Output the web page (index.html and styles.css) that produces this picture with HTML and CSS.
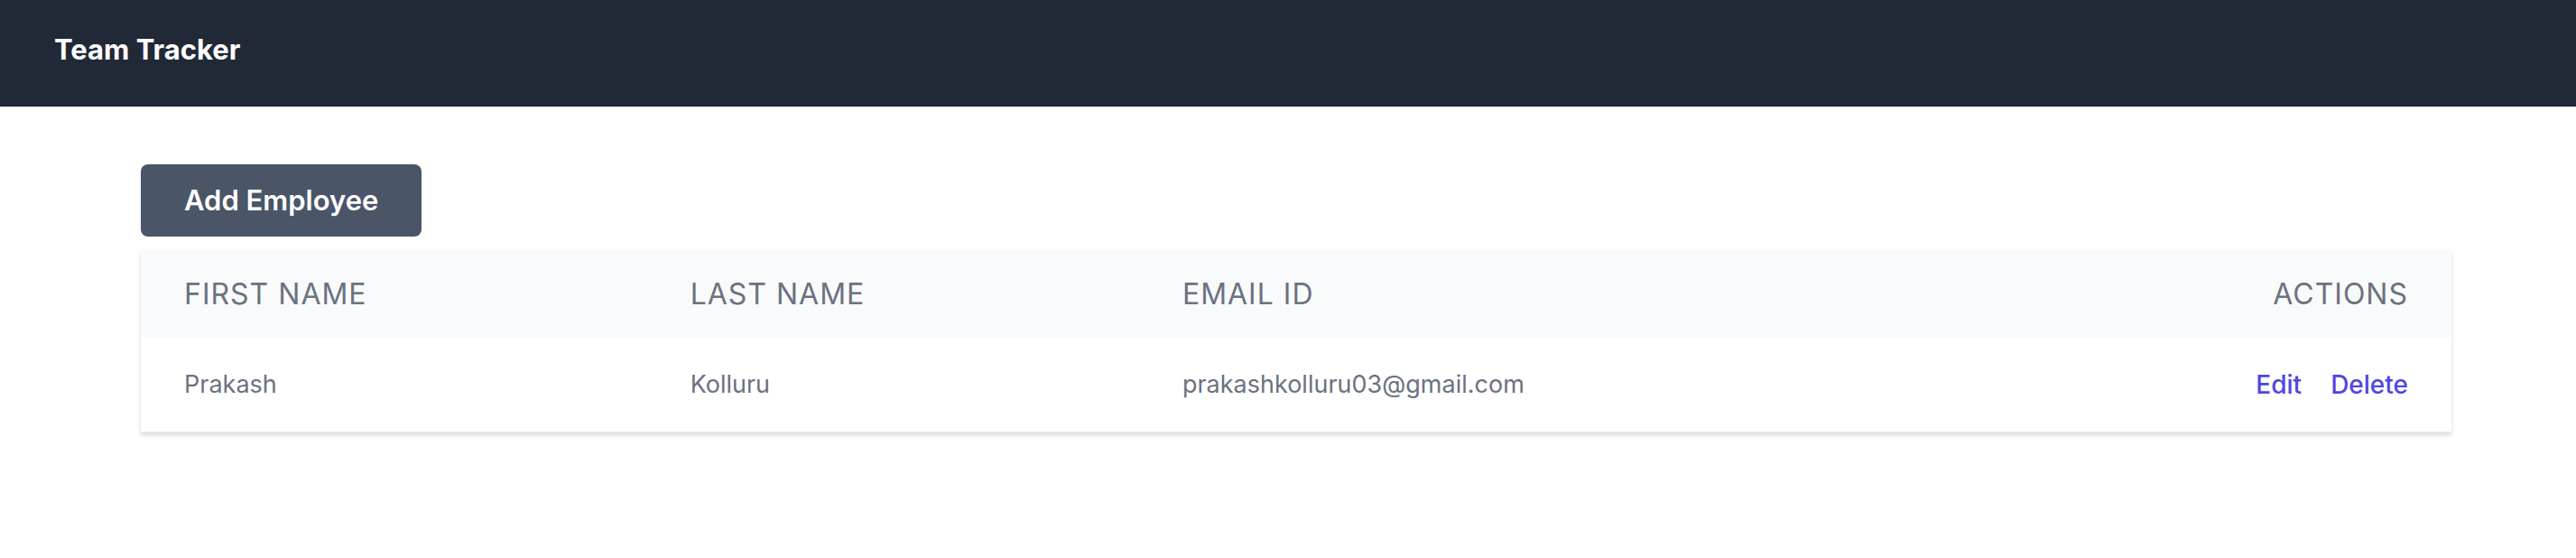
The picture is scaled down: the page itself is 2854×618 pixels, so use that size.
FILE: index.html
```html
<!DOCTYPE html>
<html lang="en">
<head>
<meta charset="utf-8">
<title>Team Tracker</title>
<link rel="stylesheet" href="styles.css">
</head>
<body>
<header class="navbar">
  <a class="brand" href="#">Team Tracker</a>
</header>
<main class="content">
  <button class="add-button" type="button">Add Employee</button>
  <div class="table-card">
    <table class="employees">
      <colgroup>
        <col class="col-first">
        <col class="col-last">
        <col class="col-email">
        <col class="col-actions">
      </colgroup>
      <thead>
        <tr>
          <th scope="col">First Name</th>
          <th scope="col">Last Name</th>
          <th scope="col">Email ID</th>
          <th scope="col" class="actions">Actions</th>
        </tr>
      </thead>
      <tbody>
        <tr>
          <td>Prakash</td>
          <td>Kolluru</td>
          <td>prakashkolluru03@gmail.com</td>
          <td class="actions"><div class="links"><a class="link" href="#">Edit</a><a class="link" href="#">Delete</a></div></td>
        </tr>
      </tbody>
    </table>
  </div>
</main>
</body>
</html>
```
FILE: styles.css
```css
* {
  box-sizing: border-box;
}

body {
  margin: 0;
  background: #ffffff;
  font-family: Inter, "Liberation Sans", sans-serif;
  color: #6b7280;
}

.navbar {
  padding: 31px 60px 38px;
  background: #222936;
  border-bottom: 1px solid #1a202c;
}

.brand {
  display: block;
  font-size: 31px;
  line-height: 48px;
  font-weight: 700;
  color: #ffffff;
  text-decoration: none;
}

.content {
  display: flex;
  flex-direction: column;
  align-items: flex-start;
  gap: 16px;
  padding: 64px 138px 64px 156px;
}

.add-button {
  padding: 16px 48px;
  border: 0;
  border-radius: 8px;
  background: #4a5568;
  color: #ffffff;
  font-family: inherit;
  font-size: 31px;
  line-height: 48px;
  font-weight: 600;
}

.table-card {
  width: 100%;
  border-bottom: 2px solid #e5e7eb;
  box-shadow: 0 2px 6px rgba(0, 0, 0, 0.1), 0 2px 4px rgba(0, 0, 0, 0.06);
}

.employees {
  width: 100%;
  table-layout: fixed;
  border-collapse: collapse;
  text-align: left;
}

.col-first {
  width: 21.9%;
}

.col-last {
  width: 21.3%;
}

.col-email {
  width: 35%;
}

.employees th {
  padding: 24px 48px;
  background: #f9fafb;
  font-size: 32px;
  line-height: 48px;
  font-weight: 400;
  letter-spacing: 1px;
  text-transform: uppercase;
}

.employees td {
  padding: 32px 48px;
  background: #ffffff;
  font-size: 27px;
  line-height: 40px;
}

.employees .actions {
  text-align: right;
}

.links {
  display: flex;
  justify-content: flex-end;
  gap: 32px;
}

.link {
  color: #4f46e5;
  font-size: 28px;
  font-weight: 500;
  text-decoration: none;
}
```
